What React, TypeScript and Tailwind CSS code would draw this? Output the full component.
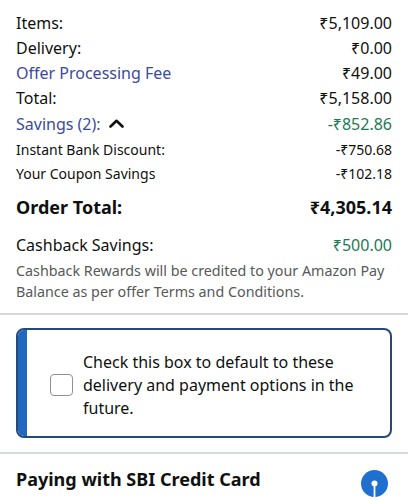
import React from "react";

const Row = ({ left, right, leftClass = "", rightClass = "", h = "h-[25px]" }: { left: React.ReactNode; right: React.ReactNode; leftClass?: string; rightClass?: string; h?: string }) => (
  <div className={`flex items-center justify-between ${h}`}>
    <div className={leftClass}>{left}</div>
    <div className={rightClass}>{right}</div>
  </div>
);

export default function App() {
  return (
    <div className="w-[408px] h-[500px] overflow-hidden bg-white text-[#0f1111]" style={{ fontFamily: '"Noto Sans", "Open Sans", sans-serif' }}>
      <div className="pl-[16px] pr-[16px] pt-[10px]">
        <Row left="Items:" right="₹5,109.00" leftClass="text-[16px]" rightClass="text-[16px]" />
        <Row left="Delivery:" right="₹0.00" leftClass="text-[16px]" rightClass="text-[16px]" />
        <Row left="Offer Processing Fee" right="₹49.00" leftClass="text-[16px] text-[#3b4a9e]" rightClass="text-[16px]" />
        <Row left="Total:" right="₹5,158.00" leftClass="text-[16px]" rightClass="text-[16px]" />
        <Row
          h="h-[27px]"
          left={
            <span className="flex items-center gap-[8px] text-[16px] text-[#3b4a9e]">
              Savings (2):
              <svg width="15" height="9" viewBox="0 0 15 9" className="text-[#0f1111]">
                <path d="M1.5 7.5 L7.5 1.8 L13.5 7.5" fill="none" stroke="currentColor" strokeWidth="2.6" strokeLinecap="round" strokeLinejoin="round" />
              </svg>
            </span>
          }
          right="-₹852.86"
          rightClass="text-[16px] text-[#1e7a52]"
        />
        <Row h="h-[24px]" left="Instant Bank Discount:" right="-₹750.68" leftClass="text-[14px]" rightClass="text-[14px]" />
        <Row h="h-[24px]" left="Your Coupon Savings" right="-₹102.18" leftClass="text-[14px]" rightClass="text-[14px]" />
        <div className="mt-[3px]">
          <Row h="h-[38px]" left="Order Total:" right="₹4,305.14" leftClass="text-[18px] font-bold" rightClass="text-[18px] font-bold" />
        </div>
        <div className="mt-[6px]">
          <Row h="h-[26px]" left="Cashback Savings:" right="₹500.00" leftClass="text-[16px]" rightClass="text-[16px] text-[#1e7a52]" />
        </div>
        <p className="mt-[2px] text-[14.3px] leading-[21px] text-[#565959]">
          Cashback Rewards will be credited to your Amazon Pay Balance as per offer Terms and Conditions.
        </p>
      </div>
      <div className="mt-[11px] h-[2px] bg-[#d5d9d9]" />
      <div className="px-[16px] pt-[13px] pb-[14px]">
        <div className="flex h-[110px] overflow-hidden rounded-[8px] border-[2px] border-[#254a78]">
          <div className="w-[9px] bg-[#2168c0]" />
          <div className="flex flex-1 items-center pl-[23px] pr-[10px] pt-[4px]">
            <div className="h-[22px] w-[23px] shrink-0 rounded-[4px] border-[1.5px] border-[#8d9096] bg-white" />
            <div className="ml-[10px] text-[16px] leading-[23px]">
              Check this box to default to these delivery and payment options in the future.
            </div>
          </div>
        </div>
      </div>
      <div className="h-[2px] bg-[#d5d9d9]" />
      <div className="flex items-center justify-between pl-[16px] pr-[20px] pt-[8px]">
        <div className="text-[18px] font-bold">Paying with SBI Credit Card</div>
        <svg width="27" height="27" viewBox="0 0 27 27" className="mt-[8px]">
          <circle cx="13.5" cy="13.5" r="13.5" fill="#1f6fd1" />
          <circle cx="13.5" cy="13.5" r="3" fill="#fff" />
          <rect x="12.6" y="13.5" width="1.8" height="14" fill="#fff" />
        </svg>
      </div>
    </div>
  );
}
